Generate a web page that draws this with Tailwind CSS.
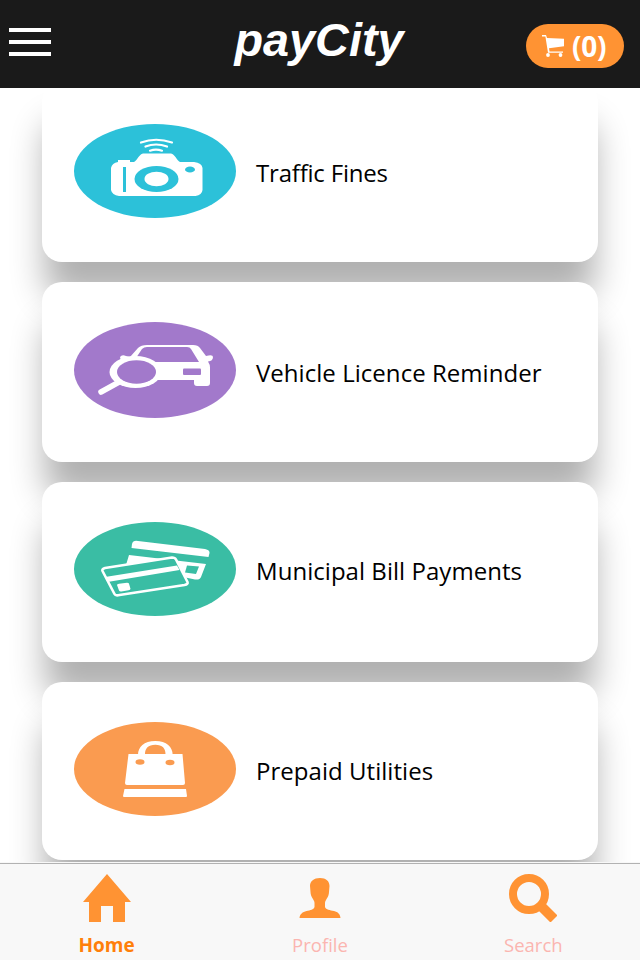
<!DOCTYPE html>
<html lang="en">
<head>
    <meta charset="UTF-8">
    <meta name="viewport" content="width=device-width, initial-scale=1.0">
    <title>payCity</title>
    <script src="https://cdn.jsdelivr.net/npm/@tailwindcss/browser@4"></script>
</head>
<body class="bg-white h-[960px] overflow-hidden flex flex-col font-['Open_Sans',sans-serif] text-black">
    <!-- Header -->
    <header class="relative z-10 bg-[#1a1a1a] h-[88px] shrink-0 grid grid-cols-3 items-center">
        <button type="button" aria-label="Menu" class="ml-[9px] mb-1 w-[42px] flex flex-col gap-2">
            <span class="h-1 bg-white"></span>
            <span class="h-1 bg-white"></span>
            <span class="h-1 bg-white"></span>
        </button>
        <svg class="w-[213px] h-[88px]" viewBox="0 0 213 88" fill="#fff">
            <text x="21.500" y="55.500" textLength="169" lengthAdjust="spacingAndGlyphs" font-family="Liberation Sans, sans-serif" font-size="47" font-weight="700" font-style="italic">payCity</text>
        </svg>
        <a href="#" class="justify-self-end mr-4 mt-1 w-[98px] h-11 rounded-[22px] bg-[#ff9333] text-white flex items-center pl-4 gap-[7px]">
            <svg class="w-[23px] h-[22px]" viewBox="0 0 23 22" fill="#fff">
                <path d="M0 0h4l1 3 17 .8v7.400L7 13.200l.5 3.300H21v1.300H6L3.400 1.600H0z"/>
                <circle cx="6" cy="20" r="1.900"/>
                <circle cx="18.500" cy="20" r="1.900"/>
            </svg>
            <span class="text-[28px] leading-none font-bold tracking-[-0.3px]">(0)</span>
        </a>
    </header>

    <!-- Services -->
    <main class="-mt-1.5 flex-1 min-h-0 overflow-hidden px-[42px] flex flex-col gap-5">
        <a href="#" class="h-[180px] shrink-0 rounded-[20px] bg-white flex items-start pl-8 pt-[42px] gap-5 shadow-[0_38px_34px_-3px_rgba(0,0,0,0.31)]">
            <svg class="w-[162px] h-[94px]" viewBox="0 0 162 94">
                <ellipse cx="81" cy="47" rx="81" ry="47" fill="#2cc1d9"/>
                <g fill="none" stroke="#fff" stroke-width="2.200" stroke-linecap="round">
                    <path d="M67 18.500Q82 13 98 18.500M71.500 22.500Q82 18.500 93 22.500M76 26.700Q82 24.500 88 26.700"/>
                </g>
                <path fill="#fff" d="M44 38v-2h12v2h4c3-1 5-8 9-8.500h28c4 .5 6 7.500 9 8.500h14q8 1 8.500 6v22q-.5 5-7 6H45q-7-1-8-6V44q1-5 7-6z"/>
                <path fill="#2cc1d9" d="M49 43h3v25h-3z"/>
                <ellipse cx="82.500" cy="55" rx="22" ry="13" fill="#2cc1d9"/>
                <ellipse cx="82.500" cy="55" rx="12" ry="7.300" fill="#fff"/>
                <ellipse cx="116" cy="45.500" rx="5" ry="3" fill="#2cc1d9"/>
            </svg>
            <span class="mt-[31px] text-[24px] leading-9 whitespace-nowrap tracking-[-0.2px]">Traffic Fines</span>
        </a>
        <a href="#" class="h-[180px] shrink-0 rounded-[20px] bg-white flex items-start pl-8 pt-10 gap-5 shadow-[0_38px_34px_-3px_rgba(0,0,0,0.31)]">
            <svg class="w-[162px] h-24" viewBox="0 0 162 96">
                <ellipse cx="81" cy="48" rx="81" ry="48" fill="#a279cb"/>
                <!-- car -->
                <path fill="#fff" fill-rule="evenodd" d="M56 35l8-9q3-3 9-3h46q5 0 7 3l6 8q7-2 7 1 0 4-5 4.500 2 3 2 6V61q0 3-3 3h-10q-3 0-3-3v-3H80V40h45l-8-13q-1-2-4-2H73q-3 0-5 2l-6 9z"/>
                <rect x="109" y="46.500" width="18" height="6.500" rx="1" fill="#a279cb"/>
                <path fill="#fff" d="M47 39l-1-4q2-3 6-1l5 1-1 4z"/>
                <!-- magnifier -->
                <path d="M27 70l20-11" stroke="#fff" stroke-width="5.500" stroke-linecap="round"/>
                <ellipse cx="61.500" cy="50" rx="26" ry="16" fill="#fff"/>
                <ellipse cx="62.500" cy="50" rx="19.500" ry="11.700" fill="#a279cb"/>
            </svg>
            <span class="mt-[33px] text-[24px] leading-9 whitespace-nowrap tracking-[0.04px]">Vehicle Licence Reminder</span>
        </a>
        <a href="#" class="h-[180px] shrink-0 rounded-[20px] bg-white flex items-start pl-8 pt-10 gap-5 shadow-[0_38px_34px_-3px_rgba(0,0,0,0.31)]">
            <svg class="w-[162px] h-[94px]" viewBox="0 0 162 94">
                <ellipse cx="81" cy="47" rx="81" ry="47" fill="#3abda4"/>
                <!-- back card -->
                <path fill="#fff" d="M58 22q1-4 6-3l67 8q5 1 4.500 4l-1 4L57.500 26zM55 33l77 9-5 13q-1 3-6 2.500L52 43z"/>
                <path fill="#3abda4" d="M113 43.500l12 1-3 7.500-11-1.500z"/>
                <!-- front card -->
                <path fill="#3abda4" stroke="#fff" stroke-width="2.600" stroke-linejoin="round" d="M31 46l67-10.500q3 0 4 2L113.500 60q1 2-3 3l-65 10q-4 1-5-1L28.500 49q-1-2 2.500-3z"/>
                <path fill="#fff" d="M31 55l72-11.500 2.500 4.500-72 12zM43 63q0-1 2-1.300l8-1q2 0 2 1l1.500 5q0 1-2 1.500l-7 1.200q-2 .3-2.500-1z"/>
            </svg>
            <span class="mt-[31px] text-[24px] leading-9 whitespace-nowrap tracking-[0.04px]">Municipal Bill Payments</span>
        </a>
        <a href="#" class="h-[178px] shrink-0 rounded-[20px] bg-white flex items-start pl-8 pt-10 gap-5 shadow-[0_38px_34px_-3px_rgba(0,0,0,0.31)]">
            <svg class="w-[162px] h-[94px]" viewBox="0 0 162 94">
                <ellipse cx="81" cy="47" rx="81" ry="47" fill="#fa9b50"/>
                <path fill="#fff" fill-rule="evenodd" d="M64 33c0-8 6-14 17.300-14s17.400 6 17.400 14zM71 32h20.500c0-5.500-3-9.300-10.200-9.300S71 26.500 71 32z"/>
                <path fill="#fff" d="M54.500 32h54l2.500 29q0 2-2 2H53q-2 0-2-2zM50.500 67h61.500l1 7q0 1-1 1H50q-1 0-1-1z"/>
                <ellipse cx="66" cy="40" rx="4.500" ry="2.800" fill="#fa9b50"/>
                <ellipse cx="96" cy="40.500" rx="4.500" ry="2.800" fill="#fa9b50"/>
            </svg>
            <span class="mt-[31px] text-[24px] leading-9 whitespace-nowrap tracking-[0.04px]">Prepaid Utilities</span>
        </a>
    </main>

    <!-- Bottom tabs -->
    <nav class="relative z-10 h-[98px] shrink-0 bg-[#f8f8f8] pt-px">
        <div class="h-[97px] border-t border-[#b2b2b2] grid grid-cols-3 text-[18.500px] leading-6 text-[#fbb5b0]">
            <a href="#" class="flex flex-col items-center pt-2.5 gap-[11px] font-bold text-[#ff7f0a]">
                <svg class="w-12 h-12" viewBox="0 0 48 48" fill="#ff9333"><path d="M24 0l24 28h-6v20H30V32H18v16H6V28H0z"/></svg>
                <span class="text-[19px]">Home</span>
            </a>
            <a href="#" class="flex flex-col items-center pt-2.5 gap-[11px]">
                <svg class="w-12 h-12" viewBox="0 0 48 48" fill="#ff9333"><path d="M24 4c6 0 9.500 3 9.500 8l-.5 6c0 5-4 8-4 11v4c1 3 5 3 9 4 4 1 6 3 6.500 7H3.500c.5-4 3-6 7-7 4-1 7-1 8-4v-4c0-3-4-6-4-11l-.5-6c0-5 4-8 10-8z"/></svg>
                <span>Profile</span>
            </a>
            <a href="#" class="flex flex-col items-center pt-2.5 gap-[11px]">
                <svg class="w-12 h-12" viewBox="0 0 48 48" fill="none" stroke="#ff9333"><circle cx="20" cy="20" r="16" stroke-width="8"/><path d="M31 31l14 14" stroke-width="10"/></svg>
                <span>Search</span>
            </a>
        </div>
    </nav>
</body>
</html>
